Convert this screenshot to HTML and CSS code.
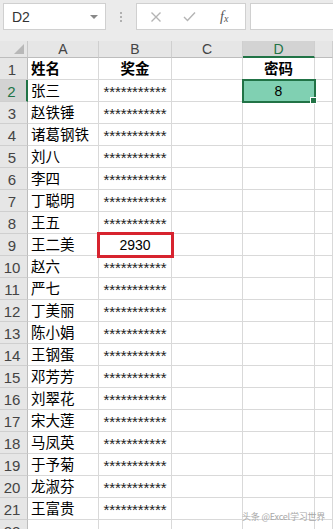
FILE: index.html
```html
<!DOCTYPE html>
<html>
<head>
<meta charset="utf-8">
<link rel="stylesheet" href="styles.css">
</head>
<body>
<div class="app">
  <div class="toolbar">
    <div class="namebox"><span class="ref">D2</span><span class="drop"></span></div>
    <div class="dots"><i></i><i></i><i></i></div>
    <div class="fbtns">
      <svg class="ic" width="12" height="12" viewBox="0 0 12 12"><path d="M1.5 1.5 L10.5 10.5 M10.5 1.5 L1.5 10.5" stroke="#b4b4b4" stroke-width="1.4" fill="none"/></svg>
      <svg class="ic" width="13" height="11" viewBox="0 0 13 11"><path d="M1 6 L4.5 9.5 L12 1.5" stroke="#b4b4b4" stroke-width="1.4" fill="none"/></svg>
      <span class="fx">f<sub>x</sub></span>
    </div>
    <div class="fbar"></div>
  </div>
  <div class="sheet">
    <div class="corner"><span class="tri"></span></div>
    <div class="ch">A</div><div class="ch">B</div><div class="ch">C</div><div class="ch sel">D</div><div class="ch">&nbsp;</div>

    <div class="rh">1</div><div class="c name b">姓名</div><div class="c ctr b">奖金</div><div class="c"></div><div class="c ctr b">密码</div><div class="c"></div>
    <div class="rh sel">2</div><div class="c name">张三</div><div class="c star">***********</div><div class="c"></div><div class="c ctr num active">8</div><div class="c"></div>
    <div class="rh">3</div><div class="c name">赵铁锤</div><div class="c star">***********</div><div class="c"></div><div class="c"></div><div class="c"></div>
    <div class="rh">4</div><div class="c name">诸葛钢铁</div><div class="c star">***********</div><div class="c"></div><div class="c"></div><div class="c"></div>
    <div class="rh">5</div><div class="c name">刘八</div><div class="c star">***********</div><div class="c"></div><div class="c"></div><div class="c"></div>
    <div class="rh">6</div><div class="c name">李四</div><div class="c star">***********</div><div class="c"></div><div class="c"></div><div class="c"></div>
    <div class="rh">7</div><div class="c name">丁聪明</div><div class="c star">***********</div><div class="c"></div><div class="c"></div><div class="c"></div>
    <div class="rh">8</div><div class="c name">王五</div><div class="c star">***********</div><div class="c"></div><div class="c"></div><div class="c"></div>
    <div class="rh">9</div><div class="c name">王二美</div><div class="c ctr num hl">2930</div><div class="c"></div><div class="c"></div><div class="c"></div>
    <div class="rh">10</div><div class="c name">赵六</div><div class="c star">***********</div><div class="c"></div><div class="c"></div><div class="c"></div>
    <div class="rh">11</div><div class="c name">严七</div><div class="c star">***********</div><div class="c"></div><div class="c"></div><div class="c"></div>
    <div class="rh">12</div><div class="c name">丁美丽</div><div class="c star">***********</div><div class="c"></div><div class="c"></div><div class="c"></div>
    <div class="rh">13</div><div class="c name">陈小娟</div><div class="c star">***********</div><div class="c"></div><div class="c"></div><div class="c"></div>
    <div class="rh">14</div><div class="c name">王钢蛋</div><div class="c star">***********</div><div class="c"></div><div class="c"></div><div class="c"></div>
    <div class="rh">15</div><div class="c name">邓芳芳</div><div class="c star">***********</div><div class="c"></div><div class="c"></div><div class="c"></div>
    <div class="rh">16</div><div class="c name">刘翠花</div><div class="c star">***********</div><div class="c"></div><div class="c"></div><div class="c"></div>
    <div class="rh">17</div><div class="c name">宋大莲</div><div class="c star">***********</div><div class="c"></div><div class="c"></div><div class="c"></div>
    <div class="rh">18</div><div class="c name">马凤英</div><div class="c star">***********</div><div class="c"></div><div class="c"></div><div class="c"></div>
    <div class="rh">19</div><div class="c name">于予菊</div><div class="c star">***********</div><div class="c"></div><div class="c"></div><div class="c"></div>
    <div class="rh">20</div><div class="c name">龙淑芬</div><div class="c star">***********</div><div class="c"></div><div class="c"></div><div class="c"></div>
    <div class="rh">21</div><div class="c name">王富贵</div><div class="c star">***********</div><div class="c"></div><div class="c"></div><div class="c"></div>
    <div class="rh">22</div><div class="c"></div><div class="c"></div><div class="c"></div><div class="c"></div><div class="c"></div>
  </div>
  <div class="watermark">头条 @Excel学习世界</div>
</div>
</body>
</html>
```
FILE: styles.css
```css
* { box-sizing: border-box; }
html, body { margin: 0; padding: 0; background: #fff; }
body { width: 333px; height: 529px; overflow: hidden; font-family: "Liberation Sans", Arial, sans-serif; }
.app { position: relative; width: 333px; height: 529px; overflow: hidden; }

.toolbar {
  height: 41px;
  background: #ebebeb;
  display: flex;
  align-items: flex-start;
  padding-top: 3px;
  padding-left: 3px;
}
.namebox {
  width: 103px; height: 27px;
  background: #fff;
  border: 1px solid #d0d0d0;
  display: flex; align-items: center; justify-content: space-between;
  padding: 0 7px 0 8px;
}
.ref { font-size: 14px; color: #333; }
.drop { width: 0; height: 0; border-left: 4px solid transparent; border-right: 4px solid transparent; border-top: 4px solid #888; }
.dots { width: 30px; height: 27px; display: flex; flex-direction: column; align-items: center; justify-content: center; gap: 2px; }
.dots i { display: block; width: 2px; height: 2px; background: #b0b0b0; }
.fbtns {
  width: 110px; height: 27px;
  background: #fff;
  border: 1px solid #d0d0d0;
  display: flex; align-items: center;
  padding-left: 13px; gap: 21px;
}
.fx { font-family: "Liberation Serif", serif; font-style: italic; font-size: 14px; color: #555; margin-left: 3px; }
.fx sub { font-size: 10px; vertical-align: -1px; }
.fbar { flex: 1; height: 27px; margin-left: 4px; background: #fff; border: 1px solid #d0d0d0; border-right: none; }

.sheet {
  display: grid;
  grid-template-columns: 28px 71px 73px 71px 72px 18px;
  grid-template-rows: 17px;
  grid-auto-rows: 22px;
}
.corner { background: #e6e6e6; border-right: 1px solid #c8c8c8; border-bottom: 1px solid #bdbdbd; position: relative; }
.tri { position: absolute; right: 3px; bottom: 3px; width: 0; height: 0; border-left: 10px solid transparent; border-bottom: 10px solid #b8b8b8; }
.ch {
  background: #e6e6e6;
  border-right: 1px solid #cfcfcf;
  border-bottom: 1px solid #bdbdbd;
  font-size: 14px; color: #444;
  display: flex; align-items: center; justify-content: center;
}
.ch.sel { background: #d3d3d3; border-bottom: 2px solid #217346; color: #217346; }
.rh {
  background: #e6e6e6;
  border-right: 1px solid #bdbdbd;
  border-bottom: 1px solid #cfcfcf;
  font-size: 15px; color: #444;
  display: flex; align-items: flex-end; justify-content: center;
  padding-right: 3px; padding-bottom: 1px;
}
.rh.sel { background: #d3d3d3; border-right: 2px solid #217346; color: #217346; }
.c {
  border-right: 1px solid #d9d9d9;
  border-bottom: 1px solid #d9d9d9;
  font-size: 15px; color: #000;
  display: flex; align-items: flex-end;
  padding-bottom: 1px;
  white-space: nowrap; overflow: visible;
}
.name { font-family: "Noto Sans CJK SC", sans-serif; padding-left: 3px; line-height: 20px; font-size: 14.5px; }
.b { font-weight: bold; font-family: "Noto Sans CJK SC", sans-serif; }
.ctr { justify-content: center; }
.ctr.b { line-height: 20px; font-size: 14.5px; }
.star { justify-content: center; font-size: 15px; color: #222; align-items: flex-start; padding-top: 3px; letter-spacing: -0.1px; }
.num { font-size: 14px; align-items: center; padding-bottom: 0; }
.active { background: #80d0b2; outline: 2px solid #217346; outline-offset: -1px; position: relative; }
.active::after { content: ""; position: absolute; right: -3px; bottom: -3px; width: 5px; height: 5px; background: #217346; border: 1px solid #fff; }
.hl { outline: 3px solid #d7232f; outline-offset: -1px; position: relative; z-index: 1; }

.watermark {
  position: absolute; left: 242px; top: 510px;
  font-family: "Noto Sans CJK SC", sans-serif;
  font-size: 9px; color: #a8a8a8; letter-spacing: -0.2px;
  white-space: nowrap;
}
```
